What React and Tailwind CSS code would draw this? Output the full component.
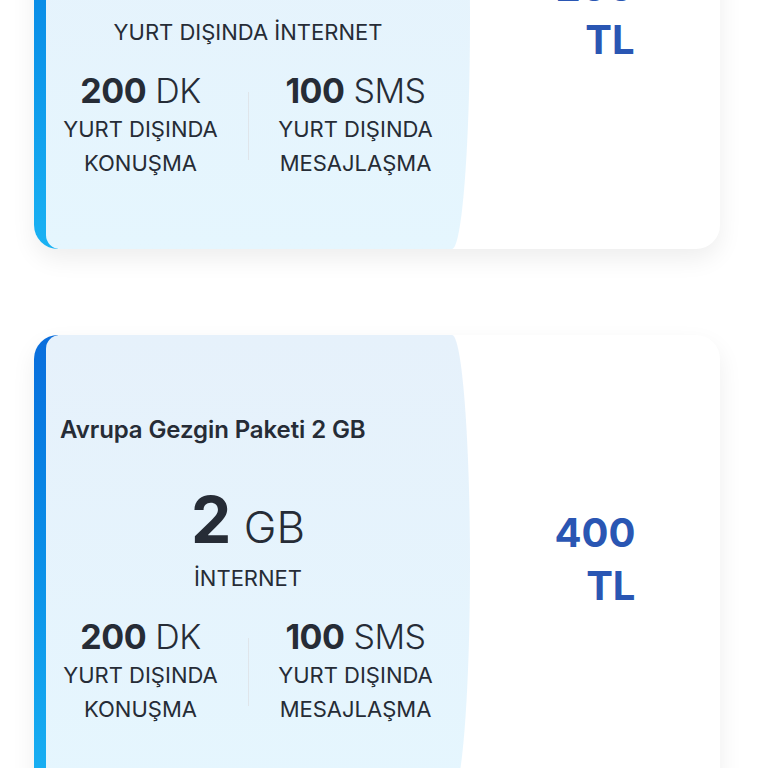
import React from 'react';

const packages = [
  { title: 'Avrupa Gezgin Paketi 1 GB', gb: '1', label: 'YURT DIŞINDA İNTERNET', price: '200' },
  { title: 'Avrupa Gezgin Paketi 2 GB', gb: '2', label: 'İNTERNET', price: '400' },
];

function Stat({ value, unit, line1, line2 }) {
  return (
    <div className="w-[180px] text-center">
      <div className="text-[34px] leading-[40px] tracking-[-0.5px]">
        <span className="font-bold">{value}</span> <span className="font-light">{unit}</span>
      </div>
      <div className="mt-px text-[22px] leading-[34px]">{line1}</div>
      <div className="text-[22px] leading-[34px]">{line2}</div>
    </div>
  );
}

function PackageCard({ pkg }) {
  return (
    <div className="flex h-[460px] w-[686px] overflow-hidden rounded-[24px] bg-white shadow-[0_10px_24px_rgba(0,0,0,0.07)]">
      <div className="w-6 shrink-0 bg-gradient-to-b from-[#0a6ddc] to-[#1ab2f3]" />
      <div className="-ml-3 w-[424px] shrink-0 rounded-l-[14px] rounded-tr-[18px_230px] rounded-br-[18px_230px] bg-gradient-to-b from-[#e6f1fb] to-[#e5f6fe] pl-[14px] pt-[80px] text-[#262c36]">
        <div className="text-[24px] font-semibold leading-[30px] tracking-[-0.1px]">{pkg.title}</div>
        <div className="-ml-[14px] w-[404px] text-center">
          <div className="mt-[43px] text-[64px] leading-[64px]">
            <span className="font-bold">{pkg.gb}</span>
            <span className="text-[44px] font-light"> GB</span>
          </div>
          <div className="mt-[5px] text-[22px] leading-[28px]">{pkg.label}</div>
          <div className="mt-[25px] flex items-center justify-center">
            <Stat value="200" unit="DK" line1="YURT DIŞINDA" line2="KONUŞMA" />
            <div className="mx-[17px] h-[68px] w-px bg-[#dfe5ea]" />
            <Stat value="100" unit="SMS" line1="YURT DIŞINDA" line2="MESAJLAŞMA" />
          </div>
        </div>
      </div>
      <div className="flex flex-1 items-center justify-center">
        <div className="-mt-[13px] flex flex-col items-end text-[40px] font-bold leading-[53px] text-[#2a56b3]">
          <span>{pkg.price}</span>
          <span>TL</span>
        </div>
      </div>
    </div>
  );
}

export default function App() {
  return (
    <div className="h-[768px] overflow-hidden bg-white font-['Inter','Liberation_Sans',sans-serif]">
      <div className="-mt-[211px] flex flex-col gap-[86px] pl-[34px]">
        {packages.map((p) => (
          <PackageCard key={p.title} pkg={p} />
        ))}
      </div>
    </div>
  );
}
